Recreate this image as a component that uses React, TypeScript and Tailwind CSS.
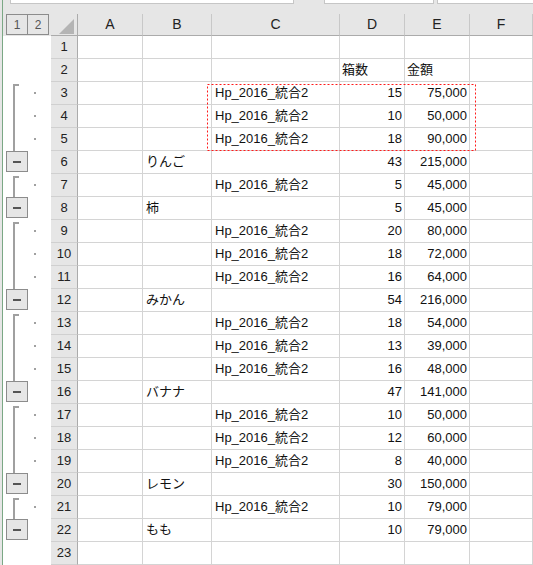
import React from "react"

type Kind = "start" | "mid" | "sum" | undefined

type Row = {
    n: number
    b?: string
    c?: string
    d?: string
    e?: string
    head?: boolean
    kind?: Kind
}

const HP = "Hp_2016_統合2"

const rows: Row[] = [
    { n: 1 },
    { n: 2, d: "箱数", e: "金額", head: true },
    { n: 3, c: HP, d: "15", e: "75,000", kind: "start" },
    { n: 4, c: HP, d: "10", e: "50,000", kind: "mid" },
    { n: 5, c: HP, d: "18", e: "90,000", kind: "mid" },
    { n: 6, b: "りんご", d: "43", e: "215,000", kind: "sum" },
    { n: 7, c: HP, d: "5", e: "45,000", kind: "start" },
    { n: 8, b: "柿", d: "5", e: "45,000", kind: "sum" },
    { n: 9, c: HP, d: "20", e: "80,000", kind: "start" },
    { n: 10, c: HP, d: "18", e: "72,000", kind: "mid" },
    { n: 11, c: HP, d: "16", e: "64,000", kind: "mid" },
    { n: 12, b: "みかん", d: "54", e: "216,000", kind: "sum" },
    { n: 13, c: HP, d: "18", e: "54,000", kind: "start" },
    { n: 14, c: HP, d: "13", e: "39,000", kind: "mid" },
    { n: 15, c: HP, d: "16", e: "48,000", kind: "mid" },
    { n: 16, b: "バナナ", d: "47", e: "141,000", kind: "sum" },
    { n: 17, c: HP, d: "10", e: "50,000", kind: "start" },
    { n: 18, c: HP, d: "12", e: "60,000", kind: "mid" },
    { n: 19, c: HP, d: "8", e: "40,000", kind: "mid" },
    { n: 20, b: "レモン", d: "30", e: "150,000", kind: "sum" },
    { n: 21, c: HP, d: "10", e: "79,000", kind: "start" },
    { n: 22, b: "もも", d: "10", e: "79,000", kind: "sum" },
    { n: 23 },
]

const cell = "h-[23px] border-r border-b border-[#d4d4d4] bg-white whitespace-nowrap overflow-hidden leading-[22px]"
const colHead = "h-[22px] bg-[#e6e6e6] border-r border-r-[#c8c8c8] border-b border-b-[#ababab] flex items-center justify-center text-[14px] text-[#222]"

function Outline({ kind }: { kind: Kind }) {
    return (
        <div className="relative h-[23px] bg-white">
            {kind === "start" && (
                <>
                    <div className="absolute left-[10px] top-[2px] bottom-0 w-[2px] bg-[#a0a0a0]" />
                    <div className="absolute left-[10px] top-[2px] w-[6px] h-[2px] bg-[#a0a0a0]" />
                    <div className="absolute left-[31px] top-[10px] w-[2px] h-[2px] bg-[#a0a0a0]" />
                </>
            )}
            {kind === "mid" && (
                <>
                    <div className="absolute left-[10px] top-0 bottom-0 w-[2px] bg-[#a0a0a0]" />
                    <div className="absolute left-[31px] top-[10px] w-[2px] h-[2px] bg-[#a0a0a0]" />
                </>
            )}
            {kind === "sum" && (
                <div className="absolute left-[3px] top-0 w-[22px] h-[21px] border border-[#8c8c8c] bg-[#e6e6e6] flex items-center justify-center">
                    <div className="w-[8px] h-[2px] bg-[#555]" />
                </div>
            )}
        </div>
    )
}

export default function App() {
    return (
        <div className="w-[533px] h-[565px] overflow-hidden flex bg-white text-[#111]" style={{ fontFamily: '"Liberation Sans", "Noto Sans CJK JP", sans-serif' }}>
            {/* window edge */}
            <div className="w-[2px] bg-[#e6e6e6]" />
            <div className="w-px bg-[#7ba885]" />

            <div className="flex-1 flex flex-col">
                {/* formula bar bottom */}
                <div className="h-[14px] bg-[#e6e6e6] flex items-start">
                    <div className="ml-[7px] w-[284px] h-[4px] bg-white border-l border-r border-b border-[#c6c6c6]" />
                    <div className="ml-[30px] w-[110px] h-[4px] bg-white border-l border-r border-b border-[#c6c6c6]" />
                    <div className="ml-[3px] flex-1 h-[4px] bg-white border-l border-b border-[#c6c6c6]" />
                </div>

                <div className="relative grid grid-cols-[48px_27px_65px_69px_128px_65px_65px_1fr]">
                    {/* header row */}
                    <div className="h-[22px] bg-[#e6e6e6] flex items-start pl-[3px]">
                        <div className="w-[22px] h-[21px] border border-[#8c8c8c] flex items-center justify-center text-[12px] text-[#555]">1</div>
                        <div className="-ml-px w-[22px] h-[21px] border border-[#8c8c8c] flex items-center justify-center text-[12px] text-[#555]">2</div>
                    </div>
                    <div className="h-[22px] bg-[#e6e6e6] border-r border-r-[#ababab] border-b border-b-[#ababab] relative">
                        <svg className="absolute left-[8px] top-[5px]" width="15" height="15" viewBox="0 0 15 15">
                            <polygon points="15,0 15,15 0,15" fill="#b4b4b4" />
                        </svg>
                    </div>
                    {["A", "B", "C", "D", "E", "F"].map((l) => (
                        <div key={l} className={colHead}>{l}</div>
                    ))}

                    {rows.map((r) => (
                        <React.Fragment key={r.n}>
                            <Outline kind={r.kind} />
                            <div className="h-[23px] bg-[#e6e6e6] border-r border-r-[#ababab] border-b border-b-[#d0d0d0] flex items-center justify-center text-[13px] text-[#222]">
                                {r.n}
                            </div>
                            <div className={cell} />
                            <div className={`${cell} pl-[3px] text-[13px]`}>{r.b}</div>
                            <div className={`${cell} pl-[3px] text-[13px]`}>{r.c}</div>
                            <div className={`${cell} text-[13px] ${r.head ? "pl-[2px]" : "text-right pr-[2px]"}`}>{r.d}</div>
                            <div className={`${cell} text-[13px] ${r.head ? "pl-[2px]" : "text-right pr-[2px]"}`}>{r.e}</div>
                            <div className={cell} />
                        </React.Fragment>
                    ))}

                    {/* copy marquee */}
                    <svg className="absolute left-[204px] top-[70px] pointer-events-none" width="269" height="67" viewBox="0 0 269 67">
                        <rect x="0.5" y="0.5" width="268" height="66" fill="none" stroke="#ff1a1a" strokeWidth="1" strokeDasharray="2 2" />
                    </svg>
                </div>
            </div>
        </div>
    )
}
